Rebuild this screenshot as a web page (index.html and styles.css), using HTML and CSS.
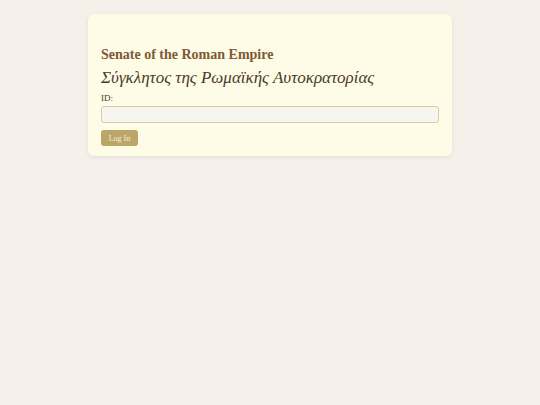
FILE: index.html
```html
<!DOCTYPE html>
<html lang="en">
  <head>
    <meta charset="UTF-8" />
    <meta name="viewport" content="width=device-width, initial-scale=1.0" />
    <title>Senate of the Roman Empire</title>
    <link rel="stylesheet" href="styles.css">
  </head>
  <body>
    <div class="card">
      <h1 class="title">Senate of the Roman Empire</h1>
      <h2 class="subtitle">Σύγκλητος της Ρωμαϊκής Αυτοκρατορίας</h2>
      <form class="login-form">
        <label for="idInput">ID:</label>
        <input type="text" id="idInput" />
        <button type="button">Log In</button>
      </form>
    </div>
  </body>
</html>
```

FILE: styles.css
```css
body {
  font-family: "Liberation Serif", "DejaVu Serif", serif;
  margin: 0;
  padding: 14px 0;
  background-color: #f5f1ea;
}
.card {
  width: 338px;
  margin: 0 auto;
  padding: 33px 13px 10px;
  background-color: #fefbe6;
  border-radius: 6px;
  box-shadow: 0 1px 4px rgba(0, 0, 0, 0.08);
}
.title {
  margin: 0 0 5px;
  font-size: 14px;
  font-weight: bold;
  color: #7b5a35;
}
.subtitle {
  margin: 0 0 5px;
  font-style: italic;
  font-weight: normal;
  font-size: 17px;
  color: #4a3a28;
}
.login-form label {
  display: block;
  font-size: 9px;
  color: #4a3a28;
  margin-bottom: 3px;
}
.login-form input {
  display: block;
  box-sizing: border-box;
  width: 100%;
  height: 17px;
  margin: 0 0 7px;
  border: 1px solid #d8cba6;
  border-radius: 3px;
  background-color: #f7f5ef;
}
.login-form button {
  display: block;
  width: 37px;
  height: 16px;
  padding: 0;
  font-family: "Liberation Serif", serif;
  font-size: 8px;
  color: #f6efd8;
  background-color: #bca568;
  border: none;
  border-radius: 3px;
}
```
